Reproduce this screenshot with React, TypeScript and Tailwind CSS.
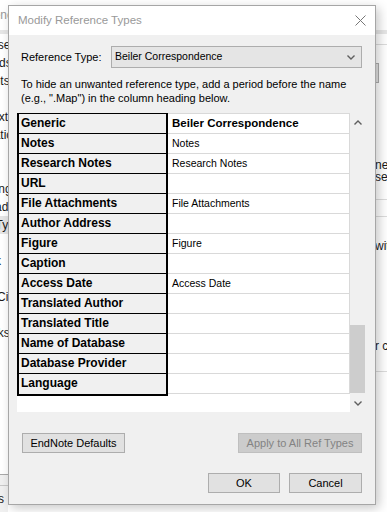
import React from "react";

const prefItems = [
  "Change Case",
  "Display Fields",
  "Display Fonts",
  "Duplicates",
  "Find Full Text",
  "Folder Locations",
  "Formatting",
  "Libraries",
  "PDF Handling",
  "Read/Unread",
  "Reference Types",
  "Sorting",
  "Spell Check",
  "Sync",
  "Temporary Citations",
  "Term Lists",
  "URLs & Links",
];

const rows: [string, string][] = [
  ["Generic", "Beiler Correspondence"],
  ["Notes", "Notes"],
  ["Research Notes", "Research Notes"],
  ["URL", ""],
  ["File Attachments", "File Attachments"],
  ["Author Address", ""],
  ["Figure", "Figure"],
  ["Caption", ""],
  ["Access Date", "Access Date"],
  ["Translated Author", ""],
  ["Translated Title", ""],
  ["Name of Database", ""],
  ["Database Provider", ""],
  ["Language", ""],
];

function Chevron({ up }: { up?: boolean }) {
  return (
    <svg width="8" height="5" viewBox="0 0 8 5">
      <polyline
        points={up ? "0.5,4.5 4,1 7.5,4.5" : "0.5,0.5 4,4 7.5,0.5"}
        fill="none"
        stroke="#5f5f5f"
        strokeWidth="1.4"
      />
    </svg>
  );
}

function Background() {
  return (
    <div className="flex flex-col h-full">
      <div className="h-[30px] w-[8px] overflow-hidden flex items-center">
        <div className="-ml-[39px] text-[12px] text-[#999] whitespace-nowrap">Preferences</div>
      </div>
      <div className="h-[4px] bg-[#e6e6e6]" />
      <div className="flex-1 flex">
        <div className="w-[8px] overflow-hidden flex flex-col">
          <div className="h-[441px] bg-white border-b border-[#a9a9a9] pt-[2px]">
            {prefItems.map((t) => (
              <div
                key={t}
                className={
                  "h-[18px] leading-[18px] -ml-[63px] text-[12px] text-[#1a1a1a] whitespace-nowrap " +
                  (t === "Reference Types" ? "bg-[#e5e5e5]" : "")
                }
              >
                {t}
              </div>
            ))}
          </div>
          <div className="flex-1 bg-[#f0f0f0]" />
        </div>
        <div className="flex-1" />
        <div className="w-[12px] bg-white flex flex-col overflow-hidden text-[12px] text-[#1a1a1a] whitespace-nowrap leading-[12px]">
          <div className="h-[10px]" />
          <div className="h-px bg-[#dcdcdc]" />
          <div className="h-[18px]" />
          <div className="h-[20px] w-[4px] bg-[#e1e1e1] border border-[#adadad]" />
          <div className="h-[76px]" />
          <div className="h-[12px]">ne</div>
          <div className="h-[12px]">sed</div>
          <div className="h-[16px]" />
          <div className="h-px bg-[#dcdcdc]" />
          <div className="h-[16px]" />
          <div className="h-px bg-[#dcdcdc]" />
          <div className="h-[23px]" />
          <div className="h-[12px]">with</div>
          <div className="h-[88px]" />
          <div className="h-[12px]">r c</div>
          <div className="h-[19px]" />
          <div className="h-px bg-[#dcdcdc]" />
        </div>
      </div>
      <div className="h-[27px] w-[8px] overflow-hidden bg-[#f0f0f0] border-t border-[#c8c8c8] flex items-center">
        <div className="-ml-[40px] text-[12px] text-[#1a1a1a] whitespace-nowrap">Defaults</div>
      </div>
    </div>
  );
}

function Btn({ label, w, disabled }: { label: string; w: string; disabled?: boolean }) {
  return (
    <div
      className={
        "h-[20px] flex items-center justify-center text-[11px] border " +
        w +
        (disabled
          ? " bg-[#cccccc] border-[#bfbfbf] text-[#838383]"
          : " bg-[#e1e1e1] border-[#adadad] text-black")
      }
    >
      {label}
    </div>
  );
}

export default function App() {
  return (
    <div className="relative w-[387px] h-[512px] overflow-hidden bg-white font-['Liberation_Sans',Arial,sans-serif]">
      <Background />

      {/* dialog window */}
      <div className="absolute left-[8px] top-[5px] w-[368px] h-[500px] border border-[#a6a6a6] bg-[#f0f0f0] shadow-[3px_3px_10px_rgba(0,0,0,0.22)] flex flex-col">
        <div className="h-[29px] bg-white flex items-center justify-between pl-[9px] pr-[9px]">
          <span className="text-[11.5px] text-[#999]">Modify Reference Types</span>
          <svg width="11" height="11" viewBox="0 0 11 11">
            <path d="M0.5 0.5 L10.5 10.5 M10.5 0.5 L0.5 10.5" stroke="#777" strokeWidth="1" />
          </svg>
        </div>

        <div className="flex-1 flex flex-col pl-[8px] pr-[9px]">
          <div className="mt-[11px] ml-[4px] mr-[4px] flex items-center h-[22px]">
            <span className="w-[90px] text-[11px] text-black">Reference Type:</span>
            <div className="flex-1 h-[22px] bg-[#e5e5e5] border border-[#adadad] flex items-center justify-between pl-[3px] pr-[6px]">
              <span className="text-[10.5px] text-black">Beiler Correspondence</span>
              <Chevron />
            </div>
          </div>

          <div className="mt-[9px] ml-[4px] text-[11px] leading-[14px] text-black whitespace-nowrap">
            To hide an unwanted reference type, add a period before the name
            <br />
            (e.g., ".Map") in the column heading below.
          </div>

          <div className="mt-[8px] h-[299px] flex">
            <div className="flex-1 bg-white flex items-start">
              <div className="w-[151px] border-l-2 border-r-2 border-t border-b-2 border-black bg-[#f0f0f0]">
                {rows.map(([l], i) => (
                  <div
                    key={l}
                    className={
                      "h-[20px] leading-[19px] pl-[2px] text-[12px] font-bold text-black whitespace-nowrap " +
                      (i < rows.length - 1 ? "border-b border-black" : "")
                    }
                  >
                    {l}
                  </div>
                ))}
              </div>
              <div className="flex-1 border-t border-r border-[#d9d9d9]">
                {rows.map(([l, r], i) => (
                  <div
                    key={l}
                    className={
                      "h-[20px] leading-[19px] pl-[4px] border-b border-[#d9d9d9] text-black whitespace-nowrap " +
                      (i === 0 ? "text-[11.5px] font-bold" : "text-[10.5px]")
                    }
                  >
                    {r}
                  </div>
                ))}
              </div>
            </div>
            <div className="w-[16px] flex flex-col items-center">
              <div className="h-[18px] flex items-center justify-center">
                <Chevron up />
              </div>
              <div className="flex-1 w-full flex flex-col justify-end">
                <div className="h-[68px] w-[15px] bg-[#cdcdcd] mb-[2px]" />
              </div>
              <div className="h-[17px] flex items-center justify-center">
                <Chevron />
              </div>
            </div>
          </div>

          <div className="mt-[21px] flex justify-between pl-[5px] pr-[4px]">
            <Btn label="EndNote Defaults" w="w-[103px]" />
            <Btn label="Apply to All Ref Types" w="w-[124px]" disabled />
          </div>

          <div className="mt-[20px] flex justify-end gap-[9px] pr-[4px]">
            <Btn label="OK" w="w-[72px]" />
            <Btn label="Cancel" w="w-[73px]" />
          </div>
        </div>
      </div>
    </div>
  );
}
